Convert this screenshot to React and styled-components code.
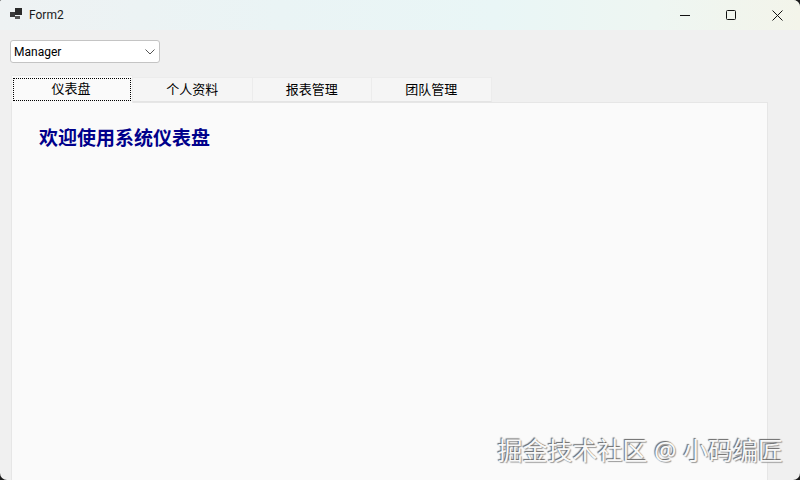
import React from "react";
import styled, { createGlobalStyle } from "styled-components";

const GlobalStyle = createGlobalStyle`
  html, body {
    margin: 0;
    padding: 0;
    width: 800px;
    height: 480px;
    overflow: hidden;
    background: #1c1c1c;
  }
  * { box-sizing: border-box; }
`;

const Window = styled.div`
  position: relative;
  width: 800px;
  height: 480px;
  display: flex;
  flex-direction: column;
  overflow: hidden;
  border-radius: 2px 7px 7px 7px;
  background: #f0f0f0;
  font-family: "Noto Sans", "Noto Sans CJK SC", sans-serif;
  color: #000;
`;

const TitleBar = styled.div`
  height: 30px;
  flex: none;
  display: flex;
  align-items: center;
  padding-left: 10px;
  background: linear-gradient(90deg, #eef2f3 0%, #eaf4f5 35%, #e9f6f6 62%, #eef6f2 82%, #f3f4ea 100%);
`;

const AppIcon = styled.svg`
  width: 12px;
  height: 12px;
  margin-top: -2px;
  flex: none;
`;

const Title = styled.span`
  margin-left: 7px;
  font-family: Roboto, "Noto Sans", sans-serif;
  font-size: 12px;
  line-height: 30px;
  color: #1a1a1a;
`;

const WindowButtons = styled.div`
  margin-left: auto;
  display: flex;
`;

const WindowButton = styled.div`
  width: 46px;
  height: 30px;
  display: flex;
  align-items: center;
  justify-content: center;
`;

const Content = styled.div`
  flex: 1;
  display: flex;
  flex-direction: column;
  padding: 10px 0 0 11px;
  min-height: 0;
`;

const Combo = styled.div`
  width: 150px;
  height: 23px;
  margin-left: -1px;
  flex: none;
  display: flex;
  align-items: center;
  justify-content: space-between;
  padding: 0 4px 0 3px;
  background: #fff;
  border: 1px solid #c4c4c4;
  border-radius: 3px;
  font-family: Roboto, "Noto Sans", sans-serif;
  font-size: 12px;
`;

const TabStrip = styled.div`
  flex: none;
  height: 27px;
  margin-top: 12px;
  display: flex;
  align-items: flex-start;
  position: relative;
  z-index: 1;
`;

const Tab = styled.div`
  width: ${(p) => (p.$active ? "122px" : "119.5px")};
  height: ${(p) => (p.$active ? "28px" : "25px")};
  margin-top: ${(p) => (p.$active ? "0" : "2px")};
  padding: ${(p) => (p.$active ? "2px 1px" : "0")};
  display: flex;
  background: ${(p) => (p.$active ? "#fafafa" : "#f5f5f5")};
  border: 1px solid #ececec;
  border-bottom: ${(p) => (p.$active ? "none" : "1px solid #e4e4e4")};
  border-left: ${(p) => (p.$active ? "1px solid #ececec" : "none")};
  font-size: 13px;
  line-height: 1;
`;

const TabLabel = styled.div`
  flex: 1;
  display: flex;
  align-items: center;
  justify-content: center;
  outline: ${(p) => (p.$focused ? "1px dotted #000" : "none")};
  outline-offset: -1px;
  padding: ${(p) => (p.$focused ? "0 2px 3px 0" : "0")};
`;

const Panel = styled.div`
  flex: 1;
  width: 757px;
  padding: 23px 27px;
  background: #fafafa;
  border-left: 1px solid #e6e6e6;
  border-right: 1px solid #e6e6e6;
  border-top: 1px solid #e6e6e6;
`;

const Heading = styled.h1`
  margin: 0;
  font-size: 19px;
  line-height: 24px;
  font-weight: 700;
  color: #00008b;
`;

const Watermark = styled.div`
  position: absolute;
  right: 17px;
  bottom: 15px;
  font-size: 25px;
  line-height: 30px;
  white-space: nowrap;
  color: #f8f8f8;
  text-shadow: -1px -1px 1px #666, 1px 1px 1px #999;
`;

export default function App() {
  return (
    <>
      <GlobalStyle />
      <Window>
        <TitleBar>
          <AppIcon viewBox="0 0 12 12">
            <rect x="0" y="4" width="5" height="5" fill="#3a3a3a" />
            <rect x="5" y="0" width="7" height="7" fill="#2b2b2b" />
            <rect x="5" y="8" width="5" height="3" fill="#555" />
          </AppIcon>
          <Title>Form2</Title>
          <WindowButtons>
            <WindowButton>
              <svg width="10" height="10" viewBox="0 0 10 10">
                <path d="M0 5.5h10" stroke="#111" strokeWidth="1" />
              </svg>
            </WindowButton>
            <WindowButton>
              <svg width="10" height="10" viewBox="0 0 10 10">
                <rect x="0.5" y="0.5" width="9" height="9" rx="1" fill="none" stroke="#111" />
              </svg>
            </WindowButton>
            <WindowButton>
              <svg width="11" height="11" viewBox="0 0 11 11">
                <path d="M0.5 0.5l10 10M10.5 0.5l-10 10" stroke="#111" strokeWidth="1" />
              </svg>
            </WindowButton>
          </WindowButtons>
        </TitleBar>
        <Content>
          <Combo>
            <span>Manager</span>
            <svg width="10" height="6" viewBox="0 0 10 6">
              <path d="M0.5 0.5L5 5l4.5-4.5" fill="none" stroke="#555" strokeWidth="1" />
            </svg>
          </Combo>
          <TabStrip>
            <Tab $active>
              <TabLabel $focused>仪表盘</TabLabel>
            </Tab>
            <Tab>
              <TabLabel>个人资料</TabLabel>
            </Tab>
            <Tab>
              <TabLabel>报表管理</TabLabel>
            </Tab>
            <Tab>
              <TabLabel>团队管理</TabLabel>
            </Tab>
          </TabStrip>
          <Panel>
            <Heading>欢迎使用系统仪表盘</Heading>
          </Panel>
        </Content>
        <Watermark>掘金技术社区 @ 小码编匠</Watermark>
      </Window>
    </>
  );
}
